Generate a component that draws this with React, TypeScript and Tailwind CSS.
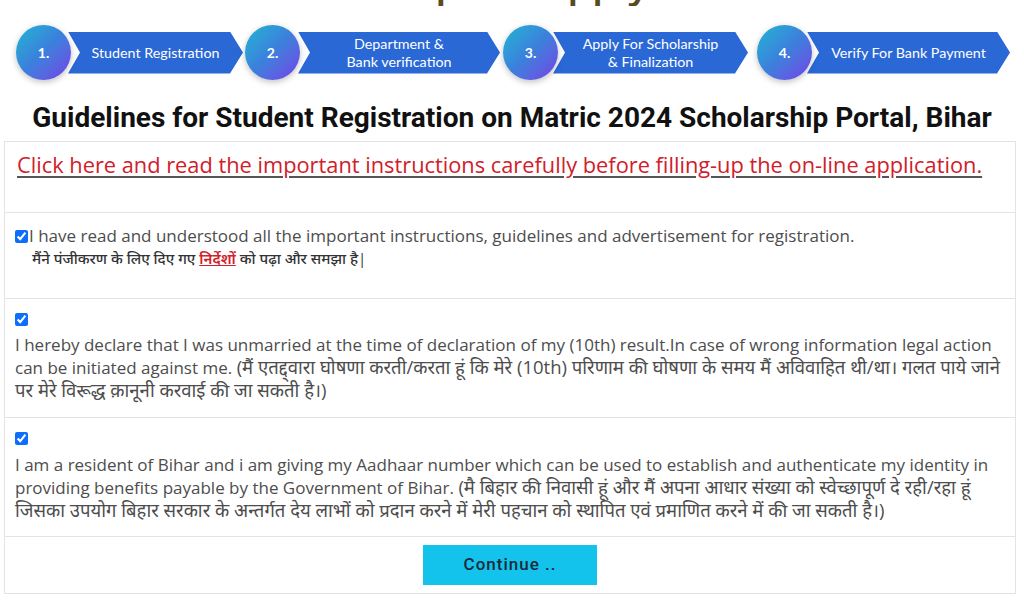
import { useState } from "react";

interface Step {
  num: string;
  lines: string[];
  gap: string;
  overlap: string;
  width: string;
}

const steps: Step[] = [
  { num: "1.", lines: ["Student Registration"], gap: "ml-0", overlap: "-ml-[3px]", width: "w-[175px]" },
  { num: "2.", lines: ["Department &", "Bank verification"], gap: "ml-[2px]", overlap: "-ml-[2px]", width: "w-[202px]" },
  { num: "3.", lines: ["Apply For Scholarship", "& Finalization"], gap: "ml-[3px]", overlap: "-ml-[5px]", width: "w-[195px]" },
  { num: "4.", lines: ["Verify For Bank Payment"], gap: "ml-[9px]", overlap: "-ml-[5px]", width: "w-[203px]" },
];

const body = "[font-family:'Open_Sans','Noto_Sans',sans-serif]";

function Check({ checked, onChange }: { checked: boolean; onChange: () => void }) {
  return (
    <input
      type="checkbox"
      checked={checked}
      onChange={onChange}
      className="w-[13px] h-[13px] m-0 accent-[#0d6efd] shrink-0"
    />
  );
}

export default function App() {
  const [checks, setChecks] = useState([true, true, true]);

  const toggle = (i: number) => {
    setChecks((prev) => prev.map((c, idx) => (idx === i ? !c : c)));
  };

  return (
    <div className="min-h-screen bg-white overflow-hidden">
      {/* cut-off page title */}
      <div className="h-[6px] overflow-hidden">
        <div className="-mt-[38px] text-center text-[40px] leading-none font-semibold text-[#5a4a1f] [font-family:'Open_Sans',sans-serif]">
          Steps to Apply
        </div>
      </div>

      {/* Steps */}
      <div className="flex items-center pl-[16px] mt-[19px] h-[55px] [font-family:'Lato','Noto_Sans',sans-serif]">
        {steps.map((s) => (
          <div key={s.num} className={`flex items-center ${s.gap}`}>
            <div className="relative z-10 w-[55px] h-[55px] rounded-full bg-linear-to-br from-[#1cb5d2] via-[#3b7fdc] to-[#6c3ce6] shadow-[0_2px_6px_rgba(0,0,0,0.25)] flex items-center justify-center text-white text-[14px] font-bold">
              {s.num}
            </div>
            <div
              className={`${s.overlap} ${s.width} h-[42px] bg-[#2a68d6] text-white text-[14.3px] leading-[18px] flex flex-col items-center justify-center text-center pl-[12px] pr-[12px] [clip-path:polygon(0_0,calc(100%-13px)_0,100%_50%,calc(100%-13px)_100%,0_100%,12px_50%)]`}
            >
              {s.lines.map((l) => (
                <span key={l} className="whitespace-nowrap">{l}</span>
              ))}
            </div>
          </div>
        ))}
      </div>

      {/* Heading */}
      <h1 className="mt-[22px] text-center text-[28px] leading-[32px] font-bold text-[#111] [font-family:'Roboto',sans-serif]">
        Guidelines for Student Registration on Matric 2024 Scholarship Portal, Bihar
      </h1>

      {/* Form box */}
      <div className={`mt-[7px] mx-[4px] w-[1012px] border border-[#e3e3e3] ${body} text-[#4d4d4d]`}>
        <div className="pt-[11px] pb-[33px] px-[12px] border-b border-[#e3e3e3]">
          <a href="#" className="text-[21.8px] leading-[24px] text-[#d0202a] underline decoration-[#555] underline-offset-[3px]">
            Click here and read the important instructions carefully before filling-up the on-line application.
          </a>
        </div>

        <div className="pt-[11px] pb-[29px] px-[10px] border-b border-[#e3e3e3]">
          <div className="flex items-center h-[24px]">
            <Check checked={checks[0]} onChange={() => toggle(0)} />
            <span className="text-[17px] leading-[24px] ml-[1px]">
              I have read and understood all the important instructions, guidelines and advertisement for registration.
            </span>
          </div>
          <div className="pl-[17px] text-[15px] leading-[21px] font-medium text-[#333]">
            मैंने पंजीकरण के लिए दिए गए{" "}
            <a href="#" className="text-[#d0202a] underline font-semibold">
              निर्देशों
            </a>{" "}
            को पढ़ा और समझा है|
          </div>
        </div>

        <div className="pt-[9px] pb-[15px] px-[10px] border-b border-[#e3e3e3]">
          <div className="flex items-center h-[23px]">
            <Check checked={checks[1]} onChange={() => toggle(1)} />
          </div>
          <p className="mt-[2px] text-[17px] leading-[23px]">
            I hereby declare that I was unmarried at the time of declaration of my (10th) result.In case of wrong information legal action can be initiated against me.{" "}
            <span className="text-[18.5px] leading-[18px]">
              (मैं एतद्द्वारा घोषणा करती/करता हूं कि मेरे (10th) परिणाम की घोषणा के समय मैं अविवाहित थी/था। गलत पाये जाने पर मेरे विरूद्ध क़ानूनी करवाई की जा सकती है।)
            </span>
          </p>
        </div>

        <div className="pt-[9px] pb-[14px] px-[10px] border-b border-[#e3e3e3]">
          <div className="flex items-center h-[23px]">
            <Check checked={checks[2]} onChange={() => toggle(2)} />
          </div>
          <p className="mt-[3px] text-[17px] leading-[23px]">
            I am a resident of Bihar and i am giving my Aadhaar number which can be used to establish and authenticate my identity in providing benefits payable by the Government of Bihar.{" "}
            <span className="text-[18.5px] leading-[18px]">
              (मै बिहार की निवासी हूं और मैं अपना आधार संख्या को स्वेच्छापूर्ण दे रही/रहा हूं जिसका उपयोग बिहार सरकार के अन्तर्गत देय लाभों को प्रदान करने में मेरी पहचान को स्थापित एवं प्रमाणित करने में की जा सकती है।)
            </span>
          </p>
        </div>

        <div className="py-[8px] flex justify-center">
          <button
            disabled={!checks.every(Boolean)}
            className="w-[174px] h-[40px] bg-[#14c3ec] text-[#1b2b3a] text-[17px] font-medium tracking-[1px] [font-family:'Roboto',sans-serif]"
          >
            Continue ..
          </button>
        </div>
      </div>
    </div>
  );
}
